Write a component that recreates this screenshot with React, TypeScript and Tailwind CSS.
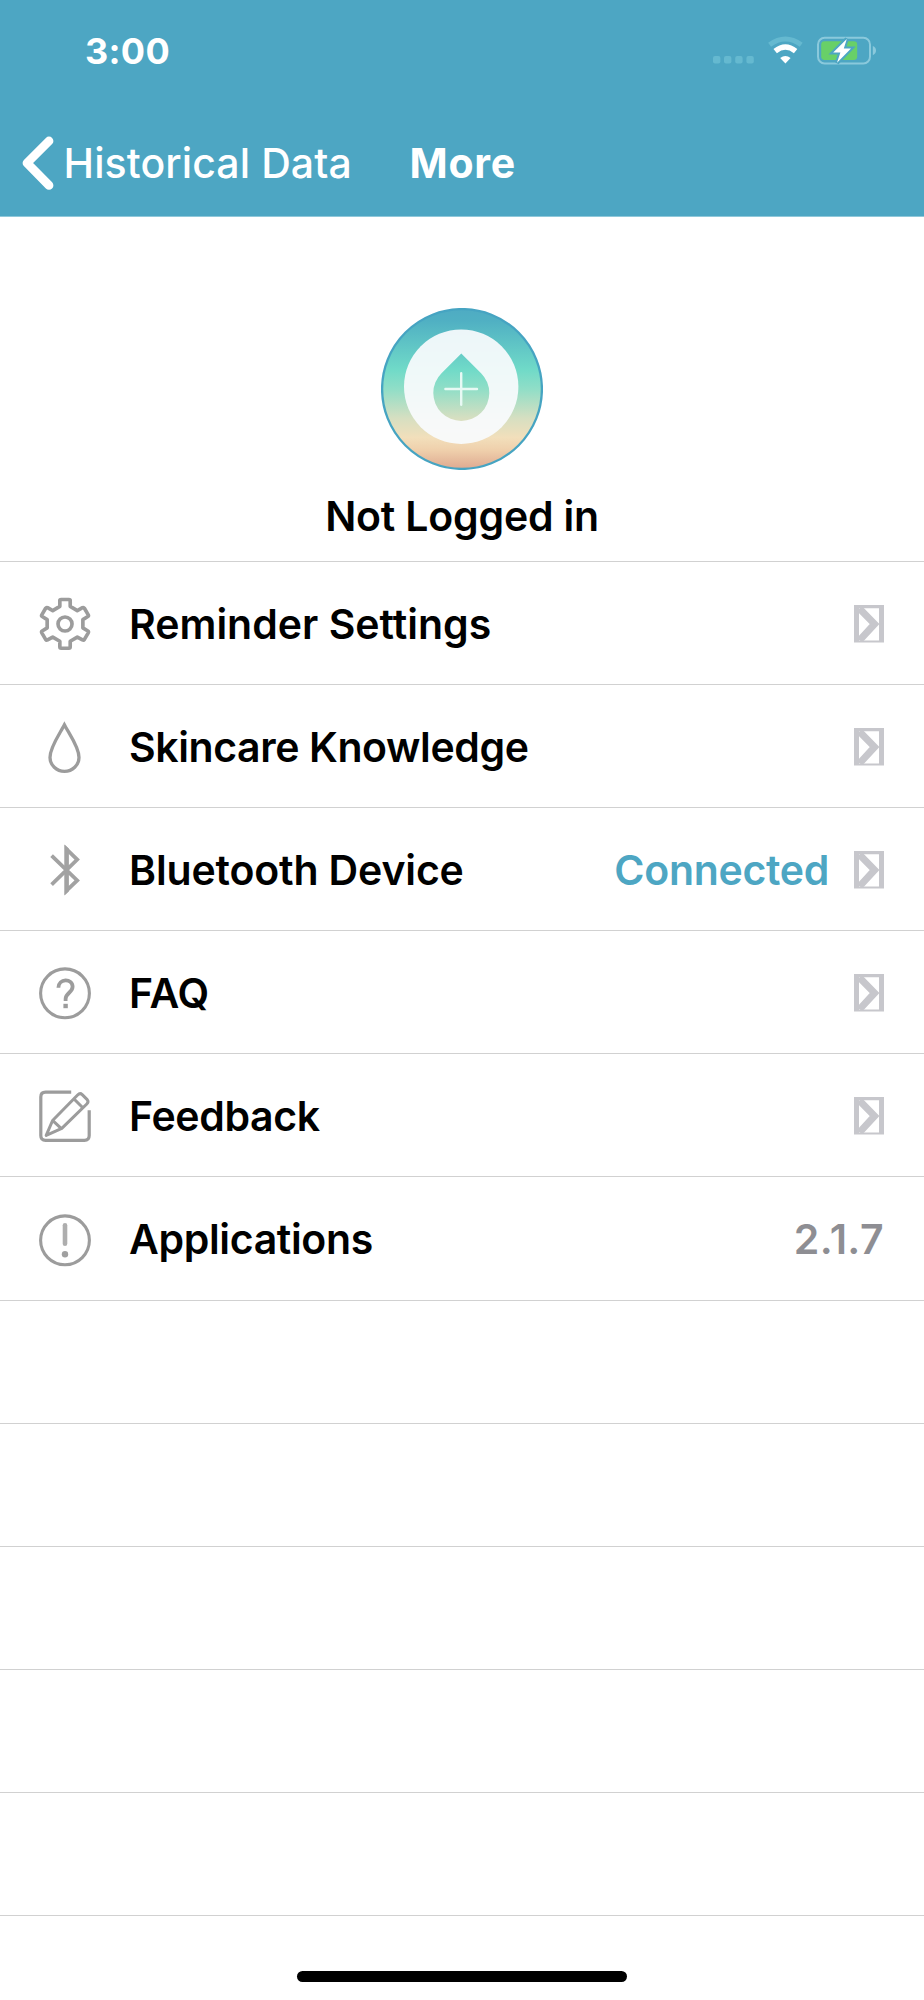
// src/App.tsx
import React from "react";

interface RowProps {
  icon: React.ReactNode;
  label: string;
  labelClass?: string;
  value?: React.ReactNode;
  arrow?: boolean;
}

const GearIcon = () => (
  <svg width="54" height="54" viewBox="0 0 54 54" fill="none" stroke="#9c9c9c" strokeWidth="3.8" strokeLinejoin="round">
    <g transform="translate(1.1 1.1) scale(.96)">
      <path d="M21.6 2.6Q21.6 1.5 23 1.5H31Q32.4 1.5 32.4 2.6V8.6L39.8 13L45.2 10Q46.4 9.4 47.2 10.6L51.2 17.4Q51.8 18.6 50.8 19.2L45.6 22.4V31L50.8 34.2Q51.8 34.9 51.2 36.2L47.2 43Q46.4 44.2 45.2 43.6L39.8 40.6L32.4 45V50.8Q32.4 52.2 31 52.2H23Q21.6 52.2 21.6 50.8V45L14.2 40.6L8.8 43.6Q7.6 44.2 6.8 43L2.8 36.2Q2.2 34.9 3.2 34.2L8.4 31V22.4L3.2 19.2Q2.2 18.6 2.8 17.4L6.8 10.6Q7.6 9.4 8.8 10L14.2 13L21.6 8.6Z" />
      <circle cx="27" cy="27" r="7.3" />
    </g>
  </svg>
);

const DropIcon = () => (
  <svg width="54" height="54" viewBox="0 0 54 54" fill="none" stroke="#9c9c9c" strokeWidth="3.3">
    <path d="M26.4 4.8C22 13.4 12 26.9 12 37.4A14.5 14 0 0 0 41 37.4C41 26.9 30.8 13.4 26.4 4.8Z" />
  </svg>
);

const BluetoothIcon = () => (
  <svg width="54" height="54" viewBox="0 0 54 54">
    <path
      d="M13.6 12.6L39.2 37.4L28.6 47.6V6.2L39.2 16.6L13.6 41.6"
      fill="none"
      stroke="#a2a2a2"
      strokeWidth="3.8"
    />
    <path d="M26.4 1.6L30.8 5.6V48.4L26.4 52.4Z" fill="#a2a2a2" />
  </svg>
);

const QuestionIcon = () => (
  <svg width="54" height="54" viewBox="0 0 54 54" fill="none" stroke="#9c9c9c">
    <circle cx="27" cy="27.3" r="24.4" strokeWidth="3.1" />
    <path d="M20.4 21.8C20.4 12 34.6 12 34.6 20.8C34.6 26.6 27.6 27 27.6 33V35" strokeWidth="3.8" />
    <path d="M25.4 40H29.8" strokeWidth="4.4" />
  </svg>
);

const EditIcon = () => (
  <svg width="54" height="54" viewBox="0 0 54 54" fill="none" stroke="#9c9c9c" strokeWidth="3.2" strokeLinejoin="round">
    <path d="M33.2 3.2H7.6Q2.8 3.2 2.8 8V46.6Q2.8 51.4 7.6 51.4H46.4Q51.2 51.4 51.2 46.6V21.2" />
    <path d="M8.2 46.4L14.6 31.5L39.6 6Q42 3.6 44.2 5.6L49.2 10.6Q51 12.8 48.8 15L23.8 39.4Z" strokeWidth="3" />
    <path d="M35.8 9.8L44.8 18.8M14.8 31.6L23.4 39.6" strokeWidth="3" />
  </svg>
);

const InfoIcon = () => (
  <svg width="54" height="54" viewBox="0 0 54 54" fill="none" stroke="#9c9c9c">
    <circle cx="27" cy="27.3" r="24.4" strokeWidth="3.1" />
    <path d="M27 12.2V30.8" stroke="#aeaeae" strokeWidth="4.6" strokeLinecap="round" />
    <circle cx="27" cy="41.2" r="3.2" fill="#a0a0a0" stroke="none" />
  </svg>
);

const Arrow = () => (
  <svg width="30" height="38" viewBox="0 0 30 38" className="shrink-0" fill="none" stroke="#c7c7cc">
    <path d="M0 0H30V37.4H0ZM5 3.2V35.4H25V3.2Z" fill="#c7c7cc" fillRule="evenodd" stroke="none" />
    <path d="M7.8 6L20.6 19L7.8 32.8" strokeWidth="7" strokeLinecap="round" />
  </svg>
);

const Avatar = () => (
  <svg width="162" height="162" viewBox="0 0 162 162">
    <defs>
      <linearGradient id="sky" x1="0" y1="0" x2="0" y2="162" gradientUnits="userSpaceOnUse">
        <stop offset="0" stopColor="#4eabc3" />
        <stop offset="0.08" stopColor="#50b0c3" />
        <stop offset="0.38" stopColor="#70dac8" />
        <stop offset="0.5" stopColor="#90dec7" />
        <stop offset="0.68" stopColor="#d6dfc1" />
        <stop offset="0.8" stopColor="#f2dfbb" />
        <stop offset="0.88" stopColor="#efcfab" />
        <stop offset="1" stopColor="#dda78f" />
      </linearGradient>
    </defs>
    <circle cx="81" cy="81" r="79.9" fill="url(#sky)" stroke="#46a4c2" strokeWidth="2.3" />
    <circle cx="80.2" cy="78.7" r="57.2" fill="#f9fbfd" fillOpacity="0.93" />
    <path d="M80.3 45.5L100.1 65.2A28 28 0 1 1 60.5 65.2Z" fill="url(#sky)" />
    <path d="M64.4 81H96M80.2 65.2V96.8" stroke="#e8f9f4" strokeWidth="2.4" strokeLinecap="round" />
  </svg>
);

const StatusIcons = () => (
  <svg width="170" height="34" viewBox="0 0 170 34" fill="none">
    <g fill="#65b9d0">
      <rect x="1" y="22" width="7.4" height="7.4" rx="2" />
      <rect x="12" y="22" width="7.4" height="7.4" rx="2" />
      <rect x="23.2" y="22" width="7.4" height="7.4" rx="2" />
      <rect x="34.4" y="22" width="7.4" height="7.4" rx="2" />
    </g>
    {/* wifi */}
    <path d="M57.6 10.8Q73.4 -0.8 89.2 10.8" stroke="#65b9d0" strokeWidth="5" />
    <path d="M63.2 17.2Q73.4 8.8 83.6 17.2" stroke="#fff" strokeWidth="5.4" />
    <path d="M68.2 24Q73.4 20 78.6 24L73.4 29.4Z" fill="#fff" />
    {/* battery */}
    <rect x="106" y="3.8" width="52" height="25.6" rx="6.6" stroke="#8ac9dc" strokeWidth="2" />
    <path d="M160.8 12Q164 13.2 164 16.6T160.8 21.2Z" fill="#8ac9dc" />
    <rect x="109.2" y="7.2" width="36" height="18.8" rx="3.4" fill="#68d068" />
    <path d="M134.8 5L121.2 18.6H128.4L125 28.8L139 14.4H131.8Z" fill="#fff" stroke="#4da6c3" strokeWidth="4" />
    <path d="M134.8 5L121.2 18.6H128.4L125 28.8L139 14.4H131.8Z" fill="#fff" />
  </svg>
);

const Row: React.FC<RowProps> = ({ icon, label, labelClass = "", value, arrow = true }) => (
  <li className="flex h-[123.1px] items-center border-b border-[#d1d1d1] pl-[38px] pr-10 pt-0.5">
    {icon}
    <span className={`ml-[37px] flex-1 whitespace-nowrap font-semibold ${labelClass}`}>{label}</span>
    {value}
    {arrow && <Arrow />}
  </li>
);

const App: React.FC = () => (
  <div className="flex h-[2000px] w-[924px] flex-col overflow-hidden bg-white font-['Inter',sans-serif] text-[41px] leading-none text-black">
    <header className="h-[216px] border-b border-[#8fc8da] bg-[#4da6c3] text-white box-content">
      <div className="flex h-[102px] items-center justify-between pl-[85px] pr-[42.5px]">
        <span className="text-[36px] font-bold tracking-[0.3px]">3:00</span>
        <StatusIcons />
      </div>
      <nav className="flex h-[114px] items-center pl-[19.5px] pt-2">
        <svg width="34" height="56" viewBox="0 0 34 56" fill="none" stroke="#fff" strokeWidth="8.8" strokeLinecap="round" strokeLinejoin="round">
          <path d="M29 6L7 28L29 50.4" />
        </svg>
        <span className="ml-[10px] w-[346px] whitespace-nowrap font-medium tracking-[0.1px]">Historical Data</span>
        <h1 className="font-bold tracking-[0.7px]">More</h1>
      </nav>
    </header>

    <section className="flex h-[345px] flex-col items-center border-b border-[#d1d1d1] pt-[91px]">
      <Avatar />
      <p className="mt-[26px] whitespace-nowrap font-semibold tracking-[-0.2px]">Not Logged in</p>
    </section>

    <ul>
      <Row icon={<GearIcon />} label="Reminder Settings" />
      <Row icon={<DropIcon />} label="Skincare Knowledge" labelClass="tracking-[-0.4px]" />
      <Row
        icon={<BluetoothIcon />}
        label="Bluetooth Device"
        labelClass="tracking-[-0.15px]"
        value={<span className="mr-[25px] font-semibold tracking-[-0.3px] text-[#4da6c3]">Connected</span>}
      />
      <Row icon={<QuestionIcon />} label="FAQ" />
      <Row icon={<EditIcon />} label="Feedback" labelClass="tracking-[-0.35px]" />
      <Row
        icon={<InfoIcon />}
        label="Applications"
        labelClass="tracking-[-0.35px]"
        value={<span className="font-semibold tracking-[0.4px] text-[#8e8e93]">2.1.7</span>}
        arrow={false}
      />
      {[0, 1, 2, 3, 4].map((i) => (
        <li key={i} className="h-[123.1px] border-b border-[#d1d1d1]" />
      ))}
    </ul>

    {/* home indicator */}
    <div className="mx-auto mt-auto mb-[18px] h-[11px] w-[330px] shrink-0 rounded-full bg-black" />
  </div>
);

export default App;
